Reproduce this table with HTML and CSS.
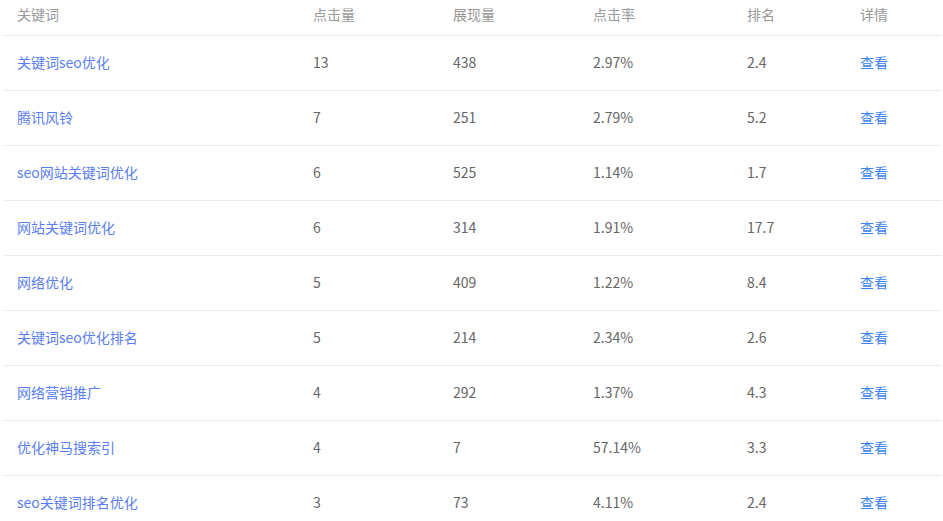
FILE: index.html
```html
<!DOCTYPE html>
<html lang="zh">
<head>
<meta charset="utf-8">
<link rel="stylesheet" href="styles.css">
</head>
<body>
<table class="kw-table">
  <colgroup>
    <col class="c1"><col class="c2"><col class="c3"><col class="c4"><col class="c5"><col class="c6">
  </colgroup>
  <thead>
    <tr><th>关键词</th><th>点击量</th><th>展现量</th><th>点击率</th><th>排名</th><th>详情</th></tr>
  </thead>
  <tbody>
    <tr><td><a class="kw">关键词seo优化</a></td><td>13</td><td>438</td><td>2.97%</td><td>2.4</td><td><a class="view">查看</a></td></tr>
    <tr><td><a class="kw">腾讯风铃</a></td><td>7</td><td>251</td><td>2.79%</td><td>5.2</td><td><a class="view">查看</a></td></tr>
    <tr><td><a class="kw">seo网站关键词优化</a></td><td>6</td><td>525</td><td>1.14%</td><td>1.7</td><td><a class="view">查看</a></td></tr>
    <tr><td><a class="kw">网站关键词优化</a></td><td>6</td><td>314</td><td>1.91%</td><td>17.7</td><td><a class="view">查看</a></td></tr>
    <tr><td><a class="kw">网络优化</a></td><td>5</td><td>409</td><td>1.22%</td><td>8.4</td><td><a class="view">查看</a></td></tr>
    <tr><td><a class="kw">关键词seo优化排名</a></td><td>5</td><td>214</td><td>2.34%</td><td>2.6</td><td><a class="view">查看</a></td></tr>
    <tr><td><a class="kw">网络营销推广</a></td><td>4</td><td>292</td><td>1.37%</td><td>4.3</td><td><a class="view">查看</a></td></tr>
    <tr><td><a class="kw">优化神马搜索引</a></td><td>4</td><td>7</td><td>57.14%</td><td>3.3</td><td><a class="view">查看</a></td></tr>
    <tr><td><a class="kw">seo关键词排名优化</a></td><td>3</td><td>73</td><td>4.11%</td><td>2.4</td><td><a class="view">查看</a></td></tr>
  </tbody>
</table>
</body>
</html>
```
FILE: styles.css
```css
html, body {
  margin: 0;
  padding: 0;
  background: #fff;
}
body {
  font-family: "Microsoft YaHei", "Noto Sans CJK SC", "Noto Sans", sans-serif;
  font-size: 14px;
  color: #666;
}
.kw-table {
  margin-left: 4px;
  width: 938px;
  border-collapse: collapse;
  table-layout: fixed;
}
.c1 { width: 296px; }
.c2 { width: 140px; }
.c3 { width: 140px; }
.c4 { width: 154px; }
.c5 { width: 113px; }
.c6 { width: 95px; }
.kw-table th {
  font-weight: normal;
  color: #999;
  text-align: left;
  padding: 4px 13px 0;
  height: 35px;
  line-height: 20px;
  vertical-align: top;
  border-bottom: 1px solid #ebebeb;
  box-sizing: border-box;
}
.kw-table td {
  height: 55px;
  box-sizing: border-box;
  padding: 0 13px 2px;
  line-height: 20px;
  vertical-align: middle;
  border-bottom: 1px solid #ebebeb;
  white-space: nowrap;
}
.kw {
  color: #5a7ef2;
  text-decoration: none;
}
.view {
  color: #3c84f4;
  text-decoration: none;
}
```
